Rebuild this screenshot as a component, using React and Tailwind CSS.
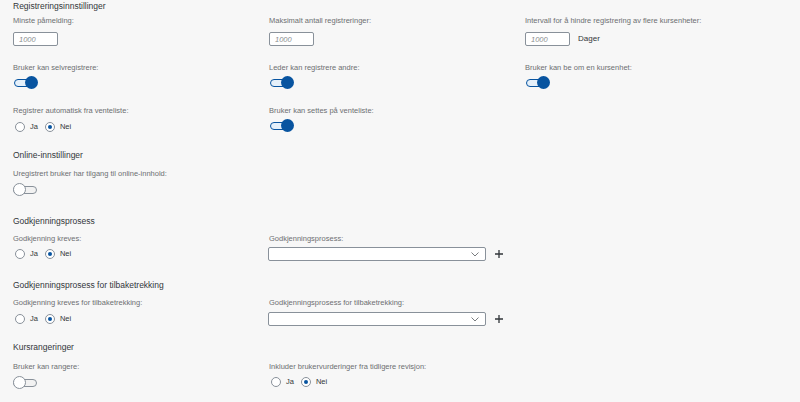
import { useState } from 'react';

const font = { fontFamily: '"Liberation Sans", Arial, sans-serif' };

function SectionTitle({ children, className = '' }) {
  return <h2 className={`text-[8.5px] leading-[13px] text-[#32363a] ${className}`}>{children}</h2>;
}

function Label({ children }) {
  return <div className="whitespace-nowrap text-[7.5px] leading-[12px] text-[#6d6f72]">{children}</div>;
}

function NumberInput({ value }) {
  return (
    <input
      readOnly
      value={value}
      className="block h-[14px] w-[45px] rounded-[2px] border border-[#89919a] bg-white px-[5px] text-[7.5px] italic text-[#8a8d90] outline-none"
    />
  );
}

function Toggle({ on: initial }) {
  const [on, setOn] = useState(initial);
  return (
    <button type="button" onClick={() => setOn(!on)} className="relative block h-[13px] w-[25px]">
      <span
        className={[
          'absolute top-[3px] h-[8px] rounded-full border',
          on ? 'left-px w-[20px] border-[#0854a0] bg-[#e5f0fa]' : 'left-0 w-[24px] border-[#89919a] bg-[#f2f2f2]',
        ].join(' ')}
      />
      <span
        className={[
          'absolute top-0 h-[13px] w-[13px] rounded-full',
          on ? 'left-[12px] bg-[#0854a0]' : 'left-0 border border-[#89919a] bg-white',
        ].join(' ')}
      />
    </button>
  );
}

function Radio({ label, checked }) {
  return (
    <span className="flex items-center gap-[5px]">
      <span className="flex h-[10px] w-[10px] items-center justify-center rounded-full border border-[#89919a] bg-white">
        {checked && <span className="h-[4px] w-[4px] rounded-full bg-[#0854a0]" />}
      </span>
      <span className="text-[7.5px] leading-[12px] text-[#32363a]">{label}</span>
    </span>
  );
}

function YesNo({ value = 'Nei' }) {
  return (
    <div className="flex h-[12px] items-center gap-[7px] pl-[2px]">
      <Radio label="Ja" checked={value === 'Ja'} />
      <Radio label="Nei" checked={value === 'Nei'} />
    </div>
  );
}

function SelectWithAdd() {
  return (
    <div className="flex items-center gap-[9px]">
      <div className="flex h-[14px] w-[218px] items-center justify-end rounded-[2px] border border-[#89919a] bg-white pr-[6px]">
        <svg width="8" height="5" viewBox="0 0 8 5" fill="none">
          <path d="M0.5 0.5 L4 4 L7.5 0.5" stroke="#6a6d70" strokeWidth="0.9" />
        </svg>
      </div>
      <svg width="8" height="8" viewBox="0 0 8 8">
        <path d="M4 0 V8 M0 4 H8" stroke="#32363a" strokeWidth="1.3" />
      </svg>
    </div>
  );
}

function Row({ children, className = '' }) {
  return <div className={`grid grid-cols-[256px_256px_256px] ${className}`}>{children}</div>;
}

export default function App() {
  return (
    <div style={font} className="min-h-[402px] w-[800px] overflow-hidden bg-[#f7f7f7] pl-[13px]">
      <SectionTitle>Registreringsinnstillinger</SectionTitle>

      <Row className="mt-[2px]">
        <div>
          <Label>Minste påmelding:</Label>
          <div className="mt-[5px]"><NumberInput value="1000" /></div>
        </div>
        <div>
          <Label>Maksimalt antall registreringer:</Label>
          <div className="mt-[5px]"><NumberInput value="1000" /></div>
        </div>
        <div>
          <Label>Intervall for å hindre registrering av flere kursenheter:</Label>
          <div className="mt-[5px] flex items-center gap-[8px]">
            <NumberInput value="1000" />
            <span className="text-[8px] text-[#32363a]">Dager</span>
          </div>
        </div>
      </Row>

      <Row className="mt-[16px]">
        <div>
          <Label>Bruker kan selvregistrere:</Label>
          <div className="mt-[2px]"><Toggle on /></div>
        </div>
        <div>
          <Label>Leder kan registrere andre:</Label>
          <div className="mt-[2px]"><Toggle on /></div>
        </div>
        <div>
          <Label>Bruker kan be om en kursenhet:</Label>
          <div className="mt-[2px]"><Toggle on /></div>
        </div>
      </Row>

      <Row className="mt-[16px]">
        <div>
          <Label>Registrer automatisk fra venteliste:</Label>
          <div className="mt-[4px]"><YesNo /></div>
        </div>
        <div>
          <Label>Bruker kan settes på venteliste:</Label>
          <div className="mt-[2px]"><Toggle on /></div>
        </div>
      </Row>

      <SectionTitle className="mt-[16px]">Online-innstillinger</SectionTitle>
      <div className="mt-[6px]">
        <Label>Uregistrert bruker har tilgang til online-innhold:</Label>
        <div className="mt-[3px]"><Toggle on={false} /></div>
      </div>

      <SectionTitle className="mt-[19px]">Godkjenningsprosess</SectionTitle>
      <Row className="mt-[5px]">
        <div>
          <Label>Godkjenning kreves:</Label>
          <div className="mt-[3px]"><YesNo /></div>
        </div>
        <div className="col-span-2">
          <Label>Godkjenningsprosess:</Label>
          <div className="-ml-px mt-[2px]"><SelectWithAdd /></div>
        </div>
      </Row>

      <SectionTitle className="mt-[18px]">Godkjenningsprosess for tilbaketrekking</SectionTitle>
      <Row className="mt-[5px]">
        <div>
          <Label>Godkjenning kreves for tilbaketrekking:</Label>
          <div className="mt-[4px]"><YesNo /></div>
        </div>
        <div className="col-span-2">
          <Label>Godkjenningsprosess for tilbaketrekking:</Label>
          <div className="-ml-px mt-[3px]"><SelectWithAdd /></div>
        </div>
      </Row>

      <SectionTitle className="mt-[15px]">Kursrangeringer</SectionTitle>
      <Row className="mt-[7px]">
        <div>
          <Label>Bruker kan rangere:</Label>
          <div className="mt-[3px]"><Toggle on={false} /></div>
        </div>
        <div>
          <Label>Inkluder brukervurderinger fra tidligere revisjon:</Label>
          <div className="mt-[3px]"><YesNo /></div>
        </div>
      </Row>
    </div>
  );
}
